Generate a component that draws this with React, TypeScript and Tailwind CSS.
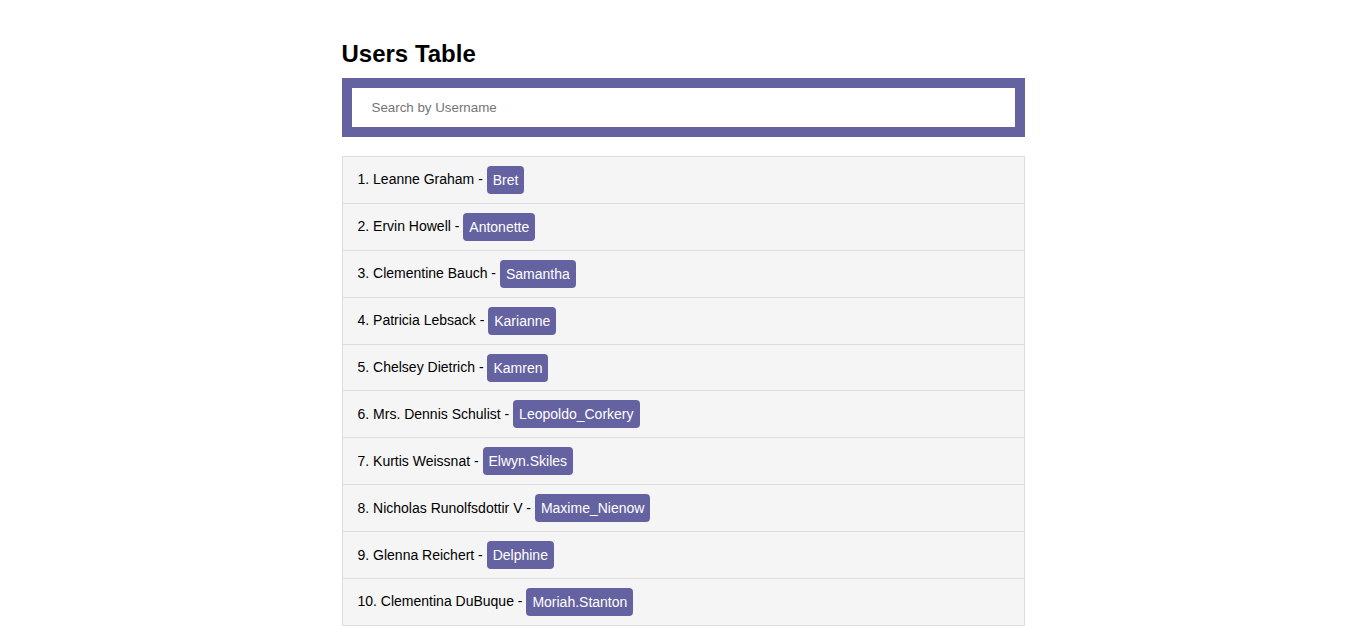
import React, { useState } from 'react';

interface User {
  id: number;
  name: string;
  username: string;
}

const users: User[] = [
  { id: 1, name: 'Leanne Graham', username: 'Bret' },
  { id: 2, name: 'Ervin Howell', username: 'Antonette' },
  { id: 3, name: 'Clementine Bauch', username: 'Samantha' },
  { id: 4, name: 'Patricia Lebsack', username: 'Karianne' },
  { id: 5, name: 'Chelsey Dietrich', username: 'Kamren' },
  { id: 6, name: 'Mrs. Dennis Schulist', username: 'Leopoldo_Corkery' },
  { id: 7, name: 'Kurtis Weissnat', username: 'Elwyn.Skiles' },
  { id: 8, name: 'Nicholas Runolfsdottir V', username: 'Maxime_Nienow' },
  { id: 9, name: 'Glenna Reichert', username: 'Delphine' },
  { id: 10, name: 'Clementina DuBuque', username: 'Moriah.Stanton' },
];

export default function App() {
  const [query, setQuery] = useState('');

  const filtered = users.filter((u) =>
    u.username.toLowerCase().includes(query.trim().toLowerCase())
  );

  return (
    <div className="min-h-screen bg-white font-['Liberation_Sans',Arial,sans-serif] text-black">
      <div className="w-1/2 mx-auto pt-[40px]">
        <h2 className="text-[24px] leading-[28px] font-bold mb-[10px]">Users Table</h2>

        {/* Search */}
        <div className="bg-[#6562a1] p-[10px]">
          <input
            type="text"
            value={query}
            onChange={(e) => setQuery(e.target.value)}
            placeholder="Search by Username"
            className="w-full h-[39px] bg-white pl-[20px] text-[13.333px] text-[#333] placeholder:text-[#757575] outline-none"
          />
        </div>

        {/* List */}
        <ul className="mt-[19px] border-x border-t border-[#dddddd]">
          {filtered.map((u) => (
            <li
              key={u.id}
              className="h-[46.9px] flex items-center pl-[15px] bg-[#f5f5f5] border-b border-[#dddddd] text-[14px]"
            >
              <span className="whitespace-pre">{`${u.id}. ${u.name} - `}</span>
              <span className="bg-[#6562a1] text-white rounded-[4px] px-[6px] h-[28px] leading-[28px]">
                {u.username}
              </span>
            </li>
          ))}
        </ul>
      </div>
    </div>
  );
}
